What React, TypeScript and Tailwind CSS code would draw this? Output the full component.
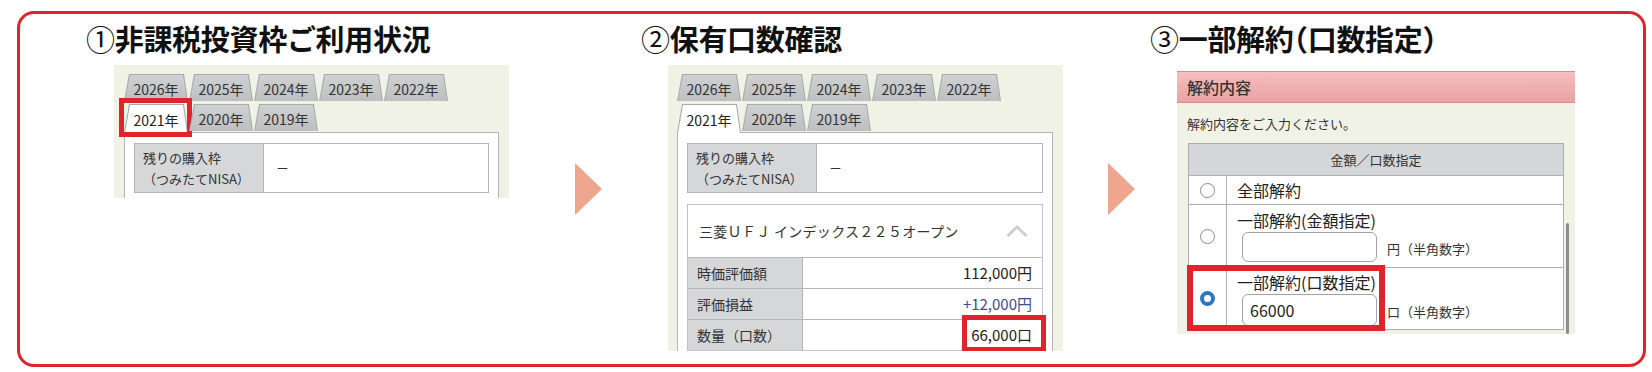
import React from 'react'

const TAB_SHAPE = '[clip-path:polygon(5px_0,calc(100%_-_4px)_0,100%_100%,0_100%)]'

function Tab({ label, active, tall }: { label: string; active?: boolean; tall?: boolean }) {
  return (
    <div
      className={`${TAB_SHAPE} w-[64px] ${tall ? 'h-[29px]' : 'h-[27px]'} bg-[#a9aaac] px-[1px] pt-[1px]`}
    >
      <div
        className={`${TAB_SHAPE} h-full flex items-center justify-center pt-[2px] text-[14px] ${
          active ? 'bg-white text-[#222]' : 'bg-gradient-to-b from-[#d0d1d3] to-[#bdbec0] text-[#333]'
        }`}
      >
        {label}
      </div>
    </div>
  )
}

// year tabs + the white box they sit on
function YearTabs({ highlight }: { highlight?: boolean }) {
  return (
    <>
      <div className="flex gap-[1px]">
        {['2026年', '2025年', '2024年', '2023年', '2022年'].map((y) => (
          <Tab key={y} label={y} />
        ))}
      </div>
      <div className="relative z-10 mt-[3px] flex items-start gap-[1px]">
        <div className="relative">
          <Tab label="2021年" active tall />
          {highlight && (
            <div className="absolute left-[-5px] top-[-6px] w-[73px] h-[39px] border-[5px] border-[#e1242c]" />
          )}
        </div>
        <Tab label="2020年" />
        <Tab label="2019年" />
      </div>
    </>
  )
}

function RemainingTable() {
  return (
    <div className="mx-[9px] mt-[10px] flex h-[50px] border border-[#b6b6b6]">
      <div className="w-[129px] bg-[#d6d7d9] border-r border-[#b6b6b6] pl-[8px] flex flex-col justify-center text-[13px] leading-[21px] text-[#333]">
        <div>残りの購入枠</div>
        <div>（つみたてNISA）</div>
      </div>
      <div className="flex-1 bg-white flex items-center pl-[12px] text-[13px] text-[#333]">－</div>
    </div>
  )
}

function Arrow() {
  return (
    <svg width="27" height="52" viewBox="0 0 27 52" className="shrink-0 mt-[149px]">
      <polygon points="0,0 27,26 0,52" fill="#eea68f" />
    </svg>
  )
}

function Title({ num, children }: { num: string; children: React.ReactNode }) {
  return (
    <h2 className="mt-[10px] h-[29px] text-[29px] leading-[29px] font-bold text-[#111] whitespace-nowrap tracking-[-0.3px]">
      <span className="font-normal">{num}</span>
      {children}
    </h2>
  )
}

function Row({ label, value, valueClass }: { label: string; value: string; valueClass?: string }) {
  return (
    <div className="flex h-[31px] border-t border-[#b6b6b6]">
      <div className="w-[115px] bg-[#d6d7d9] border-r border-[#b6b6b6] pl-[9px] flex items-center text-[14px] text-[#333]">
        {label}
      </div>
      <div className={`flex-1 flex items-center justify-end pr-[10px] text-[15px] ${valueClass ?? 'text-[#222]'}`}>
        {value}
      </div>
    </div>
  )
}

function Radio({ checked }: { checked?: boolean }) {
  return checked ? (
    <div className="w-[15px] h-[15px] rounded-full border-[4px] border-[#2a78c6] bg-white" />
  ) : (
    <div className="w-[15px] h-[15px] rounded-full border-[1.5px] border-[#8a8a8a] bg-white" />
  )
}

export default function App() {
  return (
    <div className="w-[1652px] h-[372px] bg-white pt-[11px] pl-[17px] font-['Noto_Sans_CJK_JP','Noto_Sans',sans-serif]">
      <div className="w-[1629px] h-[356px] border-[3px] border-[#e1242c] rounded-[17px] flex items-start">
        {/* step 1 */}
        <div className="ml-[66px] w-[423px] shrink-0">
          <Title num="①">非課税投資枠ご利用状況</Title>
          <div className="ml-[28px] mt-[12px] w-[395px] h-[133px] bg-[#f1f2e6] pl-[10px] pt-[9px] overflow-hidden">
            <YearTabs highlight />
            <div className="-mt-[1px] w-[375px] h-[80px] bg-white border border-[#b4b4b4]">
              <RemainingTable />
            </div>
          </div>
        </div>

        <div className="ml-[66px]">
          <Arrow />
        </div>

        {/* step 2 */}
        <div className="ml-[39px] w-[422px] shrink-0">
          <Title num="②">保有口数確認</Title>
          <div className="relative ml-[27px] mt-[12px] w-[395px] h-[286px] bg-[#f1f2e6] pl-[9px] pt-[9px] overflow-hidden">
            <YearTabs />
            <div className="-mt-[1px] w-[376px] h-[240px] bg-white border border-[#b4b4b4]">
              <RemainingTable />
              <div className="mx-[9px] mt-[11px] border border-[#c4c4c4] bg-white">
                <div className="h-[52px] flex items-center justify-between pl-[11px] pr-[14px] text-[14px] text-[#333]">
                  <span className="tracking-[0.3px]">三菱ＵＦＪ インデックス２２５オープン</span>
                  <svg width="22" height="12" viewBox="0 0 22 12">
                    <polyline points="1.5,11 11,2 20.5,11" fill="none" stroke="#cfcfcf" strokeWidth="3" />
                  </svg>
                </div>
                <Row label="時価評価額" value="112,000円" />
                <Row label="評価損益" value="+12,000円" valueClass="text-[#3c4b9e]" />
                <Row label="数量（口数）" value="66,000口" />
              </div>
            </div>
            <div className="absolute left-[294px] top-[250px] w-[84px] h-[37px] border-[5px] border-[#e1242c]" />
          </div>
        </div>

        <div className="ml-[45px]">
          <Arrow />
        </div>

        {/* step 3 */}
        <div className="ml-[15px] w-[425px] shrink-0">
          <Title num="③">
            一部解約<span className="[font-feature-settings:'halt']">（</span>口数指定
            <span className="[font-feature-settings:'halt']">）</span>
          </Title>
          <div className="relative ml-[27px] mt-[18px] w-[398px] h-[263px] bg-[#f1f2e6] overflow-hidden">
            <div className="h-[32px] bg-gradient-to-b from-[#f4bfbe] to-[#e9a2a1] border-t border-b border-[#d48c8c] flex items-center pl-[10px] text-[16px] font-medium text-[#333]">
              解約内容
            </div>
            <div className="mt-[12px] pl-[10px] text-[13px] leading-[18px] text-[#333]">
              解約内容をご入力ください。
            </div>
            <div className="ml-[11px] mt-[10px] w-[376px] border border-[#adadad] text-[#222]">
              <div className="h-[31px] bg-[#d5d6d8] flex items-center justify-center text-[13px] text-[#333]">
                金額／口数指定
              </div>
              <div className="flex h-[29px] border-t border-[#b0b0b0] bg-white">
                <div className="w-[38px] border-r border-[#b0b0b0] flex items-center justify-center">
                  <Radio />
                </div>
                <div className="pl-[10px] flex items-center text-[16px]">全部解約</div>
              </div>
              <div className="flex h-[63px] border-t border-[#b0b0b0] bg-white">
                <div className="w-[38px] border-r border-[#b0b0b0] flex items-center justify-center">
                  <Radio />
                </div>
                <div className="pl-[10px] pt-[4px]">
                  <div className="text-[16px] leading-[22px]">一部解約(金額指定)</div>
                  <div className="mt-[1px] ml-[5px] flex items-end">
                    <div className="w-[135px] h-[30px] rounded-[6px] border border-[#a2a2a2] bg-white" />
                    <span className="ml-[10px] mb-[3px] text-[13px] leading-[20px] text-[#333]">円（半角数字）</span>
                  </div>
                </div>
              </div>
              <div className="flex h-[62px] border-t border-[#b0b0b0] bg-white">
                <div className="w-[38px] border-r border-[#b0b0b0] flex items-center justify-center">
                  <Radio checked />
                </div>
                <div className="pl-[10px] pt-[3px]">
                  <div className="text-[16px] leading-[22px]">一部解約(口数指定)</div>
                  <div className="mt-[1px] ml-[5px] flex items-end">
                    <div className="w-[135px] h-[32px] rounded-[6px] border border-[#a2a2a2] bg-white flex items-center pl-[7px] text-[16px]">
                      66000
                    </div>
                    <span className="ml-[10px] mb-[4px] text-[13px] leading-[20px] text-[#333]">口（半角数字）</span>
                  </div>
                </div>
              </div>
            </div>
            <div className="absolute right-[6px] top-[152px] bottom-0 w-[3px] rounded-full bg-[#8d8d8d]" />
            <div className="absolute left-[10px] top-[194px] w-[198px] h-[66px] border-[6px] border-[#e1242c]" />
          </div>
        </div>
      </div>
    </div>
  )
}
